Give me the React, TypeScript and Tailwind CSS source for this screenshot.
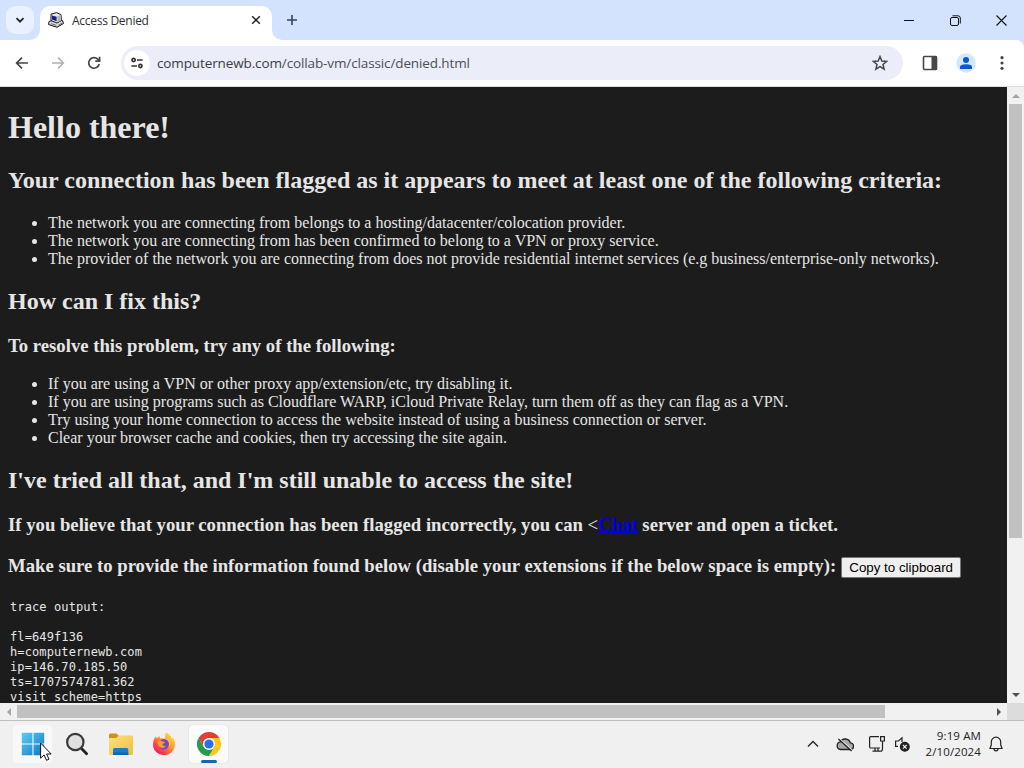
import type { ReactNode } from 'react';

const traceOutput = `trace output:

fl=649f136
h=computernewb.com
ip=146.70.185.50
ts=1707574781.362
visit_scheme=https`;

function FaviconComputer() {
    return (
        <svg viewBox="0 0 16 16" className="w-4 h-4">
            <path d="M1 9.5 5 8 14.5 8.5 15.5 11.5 9 15.3 .6 12.5Z" fill="#dadada" stroke="#111" />
            <path d="M3 2.2 8.5 .6 13 2.6 13.4 8.6 9 11 3 8.6Z" fill="#e8e8e8" stroke="#111" />
            <path d="M9.4 4.2 13 2.8 13.2 8.4 9.4 10.4Z" fill="#b5b5b5" />
            <path d="M4 3.6 8.6 4.8V9.2L4 7.6Z" fill="#1c1c8a" />
            <path d="M3 11.6 8.5 13.4M10.5 13 14 11.2" stroke="#555" strokeWidth=".8" />
        </svg>
    );
}

function TabStrip() {
    return (
        <div className="flex h-10 bg-[#d3e3fd]">
            <div className="flex w-10 shrink-0 items-center justify-center">
                <button className="flex h-7 w-7 items-center justify-center rounded-[9px] bg-[#e9f1fe]">
                    <svg viewBox="0 0 10 10" className="w-[10px] h-[10px]" fill="none" stroke="#1f1f1f" strokeWidth="1.7">
                        <path d="M1.5 3.2 5 6.7 8.5 3.2" />
                    </svg>
                </button>
            </div>
            <div className="relative mt-1.5 flex w-[232px] items-center rounded-t-[10px] bg-white pl-2 pb-1.5">
                <svg viewBox="0 0 10 10" className="absolute bottom-0 -left-[10px] w-[10px] h-[10px]">
                    <path d="M10 0V10H0A10 10 0 0 0 10 0Z" fill="#fff" />
                </svg>
                <svg viewBox="0 0 10 10" className="absolute bottom-0 -right-[10px] w-[10px] h-[10px]">
                    <path d="M0 0V10H10A10 10 0 0 1 0 0Z" fill="#fff" />
                </svg>
                <FaviconComputer />
                <span className="ml-2 grow pt-0.5 text-[12px] text-[#303030] tracking-[-0.28px]">Access Denied</span>
                <svg viewBox="0 0 10 10" className="mr-[11px] w-[10px] h-[10px]" stroke="#1f1f1f" strokeWidth="1.5">
                    <path d="M1.2 1.2 8.8 8.8M8.8 1.2 1.2 8.8" />
                </svg>
            </div>
            <div className="flex w-10 items-center justify-center">
                <svg viewBox="0 0 12 12" className="w-3 h-3" stroke="#35455c" strokeWidth="1.6">
                    <path d="M6 1V11M1 6H11" />
                </svg>
            </div>
            <div className="ml-auto flex">
                <div className="flex w-[46px] items-center justify-center">
                    <svg viewBox="0 0 10 10" className="w-[10px] h-[10px]" stroke="#111" shapeRendering="crispEdges">
                        <path d="M0 5.5H10" />
                    </svg>
                </div>
                <div className="flex w-[46px] items-center justify-center">
                    <svg viewBox="0 0 11 11" className="w-[11px] h-[11px]" fill="none" stroke="#111">
                        <rect x="0.5" y="2.5" width="8" height="8" rx="1.5" />
                        <path d="M2.5 .8H8Q10.3 .8 10.3 3V8.5" />
                    </svg>
                </div>
                <div className="flex w-[46px] items-center justify-center">
                    <svg viewBox="0 0 11 11" className="w-[11px] h-[11px]" stroke="#111" strokeWidth="1.1">
                        <path d="M.5 .5 10.5 10.5M10.5 .5 .5 10.5" />
                    </svg>
                </div>
            </div>
        </div>
    );
}

function Toolbar() {
    return (
        <div className="bg-[#d3e3fd]">
            <div className="flex h-[47px] items-center rounded-tr-lg border-b border-[#dcdfe4] bg-white pl-3.5">
                <svg viewBox="0 0 16 16" className="w-4 h-4" fill="none" stroke="#474747" strokeWidth="1.7">
                    <path d="M14 8H3M8 2.6 2.6 8 8 13.4" />
                </svg>
                <svg viewBox="0 0 16 16" className="ml-5 w-4 h-4" fill="none" stroke="#b0b0b0" strokeWidth="1.5">
                    <path d="M2 8H13M8 2.6 13.4 8 8 13.4" />
                </svg>
                <svg viewBox="0 0 16 16" className="ml-5 w-4 h-4" fill="none" stroke="#474747" strokeWidth="1.7">
                    <path d="M13.2 9A5.3 5.3 0 1 1 11.8 4.2L13.4 5.8" />
                    <path d="M13.6 1.8V6.2H9.2" />
                </svg>
                <div className="ml-[19px] flex h-[34px] w-[782px] items-center rounded-full bg-[#ebedf8] pl-[3px]">
                    <div className="flex h-[26px] w-[26px] items-center justify-center rounded-full bg-white">
                        <svg viewBox="0 0 14 12" className="w-3.5 h-3" fill="none" stroke="#333" strokeWidth="1.7">
                            <circle cx="3.6" cy="3" r="1.6" />
                            <path d="M7 3H12.6M1.4 9H7" />
                            <circle cx="10.4" cy="9" r="1.6" />
                        </svg>
                    </div>
                    <span className="ml-[7px] grow text-[13.5px] text-[#4c4f57] tracking-[-0.12px]">
                        <span className="text-[#3a3c42]">computernewb.com</span>/collab-vm/classic/denied.html
                    </span>
                    <svg viewBox="0 0 16 16" className="mr-[15px] w-4 h-4" fill="none" stroke="#474747" strokeWidth="1.5">
                        <path d="M8 1.6 9.9 6 14.6 6.4 11 9.5 12.1 14.1 8 11.6 3.9 14.1 5 9.5 1.4 6.4 6.1 6Z" />
                    </svg>
                </div>
                <svg viewBox="0 0 16 16" className="ml-[19px] w-4 h-4">
                    <rect x="1.5" y="1.5" width="13" height="13" rx="1" fill="none" stroke="#474747" strokeWidth="1.6" />
                    <path d="M9.5 1H15V15H9.5Z" fill="#474747" />
                </svg>
                <svg viewBox="0 0 20 20" className="ml-[18px] w-5 h-5">
                    <circle cx="10" cy="10" r="9.7" fill="#d3e8fd" />
                    <circle cx="10" cy="7" r="3" fill="#0b57d0" />
                    <path d="M4 16V14Q4 11.2 10 11.2T16 14V16Z" fill="#0b57d0" />
                </svg>
                <svg viewBox="0 0 4 16" className="ml-6 w-1 h-4" fill="#474747">
                    <circle cx="2" cy="2.7" r="1.6" />
                    <circle cx="2" cy="8" r="1.6" />
                    <circle cx="2" cy="13.3" r="1.6" />
                </svg>
            </div>
        </div>
    );
}

function BulletList({ children }: { children: ReactNode }) {
    return <ul className="list-disc pl-10 text-[16px] leading-[18px]">{children}</ul>;
}

function Page() {
    return (
        <div className="grow overflow-hidden bg-[#1c1c1c] px-2 font-['Liberation_Serif',serif] text-[#e6e6e6] whitespace-nowrap">
            <h1 className="mt-[22px] text-[32px] leading-[37px] font-bold">Hello there!</h1>
            <h2 className="mt-[21px] mb-5 text-[24px] leading-[27px] font-bold">
                Your connection has been flagged as it appears to meet at least one of the following criteria:
            </h2>
            <BulletList>
                <li>The network you are connecting from belongs to a hosting/datacenter/colocation provider.</li>
                <li>The network you are connecting from has been confirmed to belong to a VPN or proxy service.</li>
                <li>The provider of the network you are connecting from does not provide residential internet services (e.g business/enterprise-only networks).</li>
            </BulletList>
            <h2 className="my-5 text-[24px] leading-[27px] font-bold">How can I fix this?</h2>
            <h3 className="mb-[18px] text-[18.72px] leading-[22px] font-bold">To resolve this problem, try any of the following:</h3>
            <BulletList>
                <li>If you are using a VPN or other proxy app/extension/etc, try disabling it.</li>
                <li>If you are using programs such as Cloudflare WARP, iCloud Private Relay, turn them off as they can flag as a VPN.</li>
                <li>Try using your home connection to access the website instead of using a business connection or server.</li>
                <li>Clear your browser cache and cookies, then try accessing the site again.</li>
            </BulletList>
            <h2 className="my-5 text-[24px] leading-[27px] font-bold">I've tried all that, and I'm still unable to access the site!</h2>
            <h3 className="mb-[19px] text-[18.72px] leading-[22px] font-bold">
                If you believe that your connection has been flagged incorrectly, you can <span className="font-normal">&lt;</span>
                <a className="text-[#0000e0] underline">Chat</a> server and open a ticket.
            </h3>
            <h3 className="flex items-start text-[18.72px] leading-[22px] font-bold">
                Make sure to provide the information found below (disable your extensions if the below space is empty):
                <button className="mt-0.5 ml-[5px] h-[21px] w-[120px] rounded-[2px] border border-[#767676] bg-[#efefef] font-['Liberation_Sans',sans-serif] text-[13.33px] leading-[18px] font-normal text-black">
                    Copy to clipboard
                </button>
            </h3>
            <pre className="mt-[22px] ml-0.5 font-['DejaVu_Sans_Mono',monospace] text-[12px] leading-[15px] tracking-[0.11px]">{traceOutput}</pre>
        </div>
    );
}

function VerticalScrollbar() {
    return (
        <div className="flex w-[17px] shrink-0 flex-col items-center bg-[#f1f1f1]">
            <div className="flex h-[17px] items-center">
                <svg viewBox="0 0 8 4" className="w-2 h-1" fill="#a3a3a3"><path d="M0 4 4 0 8 4Z" /></svg>
            </div>
            <div className="h-[434px] w-[13px] bg-[#c1c1c1]" />
            <div className="mt-auto flex h-[17px] items-center">
                <svg viewBox="0 0 8 4" className="w-2 h-1" fill="#505050"><path d="M0 0 4 4 8 0Z" /></svg>
            </div>
        </div>
    );
}

function HorizontalScrollbar() {
    return (
        <div className="flex h-[17px] bg-[#dcdcdc]">
            <div className="flex w-[1007px] items-center bg-[#f1f1f1]">
                <div className="flex w-[17px] justify-center">
                    <svg viewBox="0 0 4 8" className="w-1 h-2" fill="#a3a3a3"><path d="M4 0 0 4 4 8Z" /></svg>
                </div>
                <div className="h-[13px] w-[868px] bg-[#c1c1c1]" />
                <div className="ml-auto flex w-[17px] justify-center">
                    <svg viewBox="0 0 4 8" className="w-1 h-2" fill="#505050"><path d="M0 0 4 4 0 8Z" /></svg>
                </div>
            </div>
        </div>
    );
}

function StartIcon() {
    return (
        <svg viewBox="0 0 24 24" className="w-6 h-6">
            <defs>
                <linearGradient id="start" x1="0" y1="0" x2="24" y2="24" gradientUnits="userSpaceOnUse">
                    <stop stopColor="#5fd0f7" />
                    <stop offset="1" stopColor="#0a74c4" />
                </linearGradient>
            </defs>
            <path d="M.8 .8H11.4V11.4H.8ZM12.5 .8H23.2V11.4H12.5ZM.8 12.5H11.4V23.2H.8ZM12.5 12.5H23.2V23.2H12.5Z" fill="url(#start)" />
        </svg>
    );
}

function SearchIcon() {
    return (
        <svg viewBox="0 0 24 24" className="w-6 h-6">
            <path d="M16 16 21.6 21.8" stroke="#222" strokeWidth="2.8" strokeLinecap="round" />
            <circle cx="10.3" cy="10" r="8.2" fill="#dfe1e3" stroke="#3b3b3b" strokeWidth="2.2" />
        </svg>
    );
}

function FolderIcon() {
    return (
        <svg viewBox="0 0 26 24" className="w-[26px] h-6">
            <defs>
                <linearGradient id="folder" x1="0" y1="0" x2="1" y2="1">
                    <stop stopColor="#ffe083" />
                    <stop offset="1" stopColor="#f0bd3c" />
                </linearGradient>
            </defs>
            <path d="M1 3Q1 1.5 2.5 1.5H8.5L11 4V8H1Z" fill="#c99514" />
            <path d="M1 6H8L11 3.5H23.5Q25 3.5 25 5V21.5Q25 23 23.5 23H2.5Q1 23 1 21.5Z" fill="url(#folder)" />
            <path d="M5 23V17.5Q5 16 6.5 16H18.8Q20.3 16 20.3 17.5V23Z" fill="#1c7cc6" />
            <path d="M5 20.5H20.3V23H5Z" fill="#1565ac" />
        </svg>
    );
}

function FirefoxIcon() {
    return (
        <svg viewBox="0 0 24 24" className="w-6 h-6">
            <defs>
                <linearGradient id="fox" x1="20" y1="3" x2="4" y2="22" gradientUnits="userSpaceOnUse">
                    <stop stopColor="#ffe14a" />
                    <stop offset="0.45" stopColor="#ff8a2a" />
                    <stop offset="0.8" stopColor="#f5364f" />
                    <stop offset="1" stopColor="#e31587" />
                </linearGradient>
            </defs>
            <path d="M14.6 .6C17.5 2 18.7 4 19.5 6L21.3 6.3C23 9 23.5 11.5 22.8 14.4 21.5 19.5 17.3 23 12 23 6 23 1 18.5 1 12.5 1 9 2.3 6.3 4 4.3L4.6 6.6 7.3 4 8 6.6C9.8 5.8 11.8 6.3 13.4 6.7 12.6 4.5 13 2.2 14.6 .6Z" fill="url(#fox)" />
            <circle cx="11.8" cy="12.2" r="5.2" fill="#7742d6" />
            <path d="M6 9.2C7.7 8.1 9.4 8.6 10.3 9.5L13.3 10C12.8 11.3 10.9 11.4 10.6 12.3 10.4 13.5 12 14.5 14 13.8 12.7 16.4 9 16.7 7 14.2 6 12.8 5.6 11 6 9.2Z" fill="#ff9b2e" />
            <path d="M13.4 6.7C17.5 8.4 18 12.4 16.5 15.2 19 13.2 19.2 9.5 17 7.2Z" fill="#ffc43a" />
        </svg>
    );
}

function ChromeIcon() {
    return (
        <svg viewBox="0 0 24 24" className="w-6 h-6">
            <path d="M12 6H22.4A12 12 0 0 1 12 24L17.2 15Z" fill="#fcc919" />
            <path d="M1.6 6 6.8 15 12 18 17.2 15 12 24A12 12 0 0 1 1.6 6Z" fill="#269b4b" />
            <path d="M1.6 6A12 12 0 0 1 22.4 6H12L6.8 9V15Z" fill="#df4033" />
            <circle cx="12" cy="12" r="6" fill="#fff" />
            <circle cx="12" cy="12" r="4.6" fill="#2374e8" />
        </svg>
    );
}

function Taskbar() {
    return (
        <div className="flex h-12 items-center border-t border-[#bfbfbf] bg-[#f0f0f0] pb-0.5 pl-[13px] text-[#222]">
            <div className="relative flex h-[38px] w-[39px] items-center justify-center rounded bg-[#f8f8f8]">
                <StartIcon />
                <svg viewBox="0 0 12 19" className="absolute left-[27px] top-[17px] w-3 h-[19px]">
                    <path d="M.6 1V16.2L4.1 12.9 6.5 18.3 9 17.2 6.6 12H11.2Z" fill="#fff" stroke="#111" strokeWidth="1" />
                </svg>
            </div>
            <div className="ml-[13px]"><SearchIcon /></div>
            <div className="ml-[19px]"><FolderIcon /></div>
            <div className="ml-[18px]"><FirefoxIcon /></div>
            <div className="relative ml-[13px] flex h-[38px] w-[39px] items-center justify-center rounded bg-[#fbfbfb] shadow-[0_0_1px_#bbb]">
                <ChromeIcon />
                <div className="absolute bottom-0 h-[3px] w-4 rounded-full bg-[#1268b8]" />
            </div>
            <svg viewBox="0 0 12 8" className="ml-auto w-3 h-2" fill="none" stroke="#222" strokeWidth="1.3">
                <path d="M1 6.5 6 1.5 11 6.5" />
            </svg>
            <svg viewBox="0 0 18 16" className="ml-[17px] w-[18px] h-4" stroke="#222" strokeWidth="1.3">
                <path d="M4.5 13.5H14A3.3 3.3 0 0 0 14.3 6.8 5.4 5.4 0 0 0 4.4 5.8 3.9 3.9 0 0 0 4.5 13.5Z" fill="#aaa" />
                <path d="M3.4 2.6 16.4 14.4" stroke="#f0f0f0" strokeWidth="1.2" />
                <path d="M2.4 3 15.6 15" />
            </svg>
            <svg viewBox="0 0 18 18" className="ml-[14px] w-[18px] h-[18px]" fill="none" stroke="#222" strokeWidth="1.2">
                <path d="M11 1.6H2.5Q1.6 1.6 1.6 2.5V12Q1.6 13 2.6 13H12M7 13V16M10 13V16M4.5 16.2H12.5" />
                <path d="M12.6 1.6H16.4V6H12.6ZM14.5 6V13.5Q14.5 16.3 12.5 16.3" />
            </svg>
            <svg viewBox="0 0 16 16" className="ml-[8px] w-4 h-4" fill="none" stroke="#222" strokeWidth="1.2">
                <path d="M8 6V1.8L4.5 5H1.6V10.4H4" />
                <circle cx="10.8" cy="10.8" r="4.4" fill="#222" />
                <path d="M9 9 12.6 12.6M12.6 9 9 12.6" stroke="#f0f0f0" />
            </svg>
            <div className="ml-2 w-[63px] text-right text-[11.5px] leading-[16px] tracking-[0.12px] whitespace-nowrap">
                <div>9:19 AM</div>
                <div>2/10/2024</div>
            </div>
            <svg viewBox="0 0 14 16" className="ml-2 mr-[21px] w-3.5 h-4" fill="none" stroke="#222" strokeWidth="1.2">
                <path d="M7 1.2A4.7 4.7 0 0 0 2.3 6V9L1 12.5H13L11.7 9V6A4.7 4.7 0 0 0 7 1.2ZM5 12.8A2 2 0 0 0 9 12.8" />
            </svg>
        </div>
    );
}

function App() {
    return (
        <div className="flex h-screen w-[1024px] flex-col overflow-hidden font-['Open_Sans','Noto_Sans',sans-serif]">
            <TabStrip />
            <Toolbar />
            <div className="flex h-[616px]">
                <Page />
                <VerticalScrollbar />
            </div>
            <HorizontalScrollbar />
            <Taskbar />
        </div>
    );
}

export default App;
